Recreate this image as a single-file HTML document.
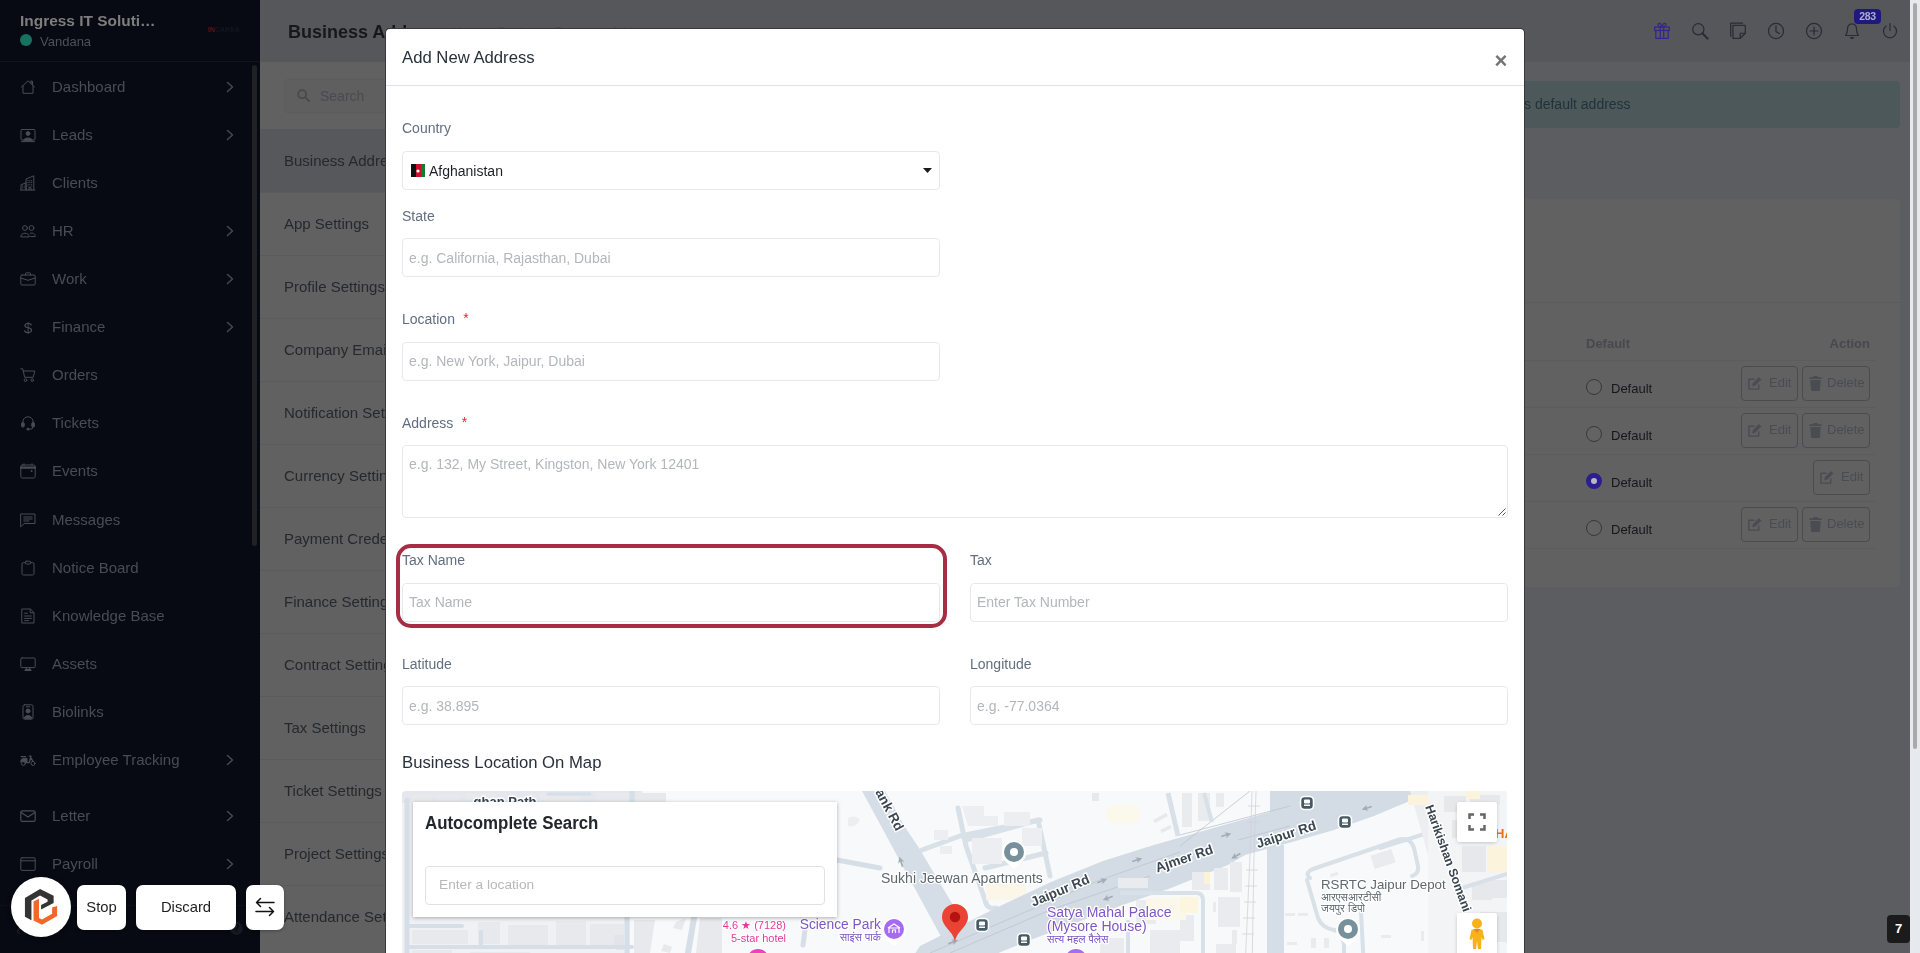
<!DOCTYPE html>
<html lang="en">
<head>
<meta charset="utf-8">
<title>Business Address</title>
<style>
*{box-sizing:border-box;margin:0;padding:0}
html,body{width:1920px;height:953px;overflow:hidden;background:#5c5d61;font-family:"Liberation Sans",sans-serif;}
.abs{position:absolute}
/* ---------- sidebar ---------- */
#sidebar{position:absolute;left:0;top:0;width:260px;height:953px;background:#070a13;overflow:hidden}
#sb-head{position:absolute;left:0;top:0;width:260px;height:62px;border-bottom:1px solid #11141c}
#sb-head .co{position:absolute;left:20px;top:11.5px;font-size:15.45px;font-weight:bold;color:#7e7e7e;white-space:nowrap;line-height:18px}
#sb-head .dot{position:absolute;left:20px;top:34.3px;width:12px;height:12px;border-radius:50%;background:#17735f}
#sb-head .un{position:absolute;left:40px;top:33.8px;font-size:13px;color:#4d5058;line-height:16px}
#sb-head .lg{position:absolute;left:208px;top:25px;font-size:7px;font-weight:bold;color:#6b1010;letter-spacing:0;line-height:10px;white-space:nowrap}
#sb-head .lg span{color:#15151a}
#sb-scroll{position:absolute;left:252px;top:65px;width:5px;height:481px;background:#1f2125;border-radius:3px}
.mi{position:absolute;left:0;width:252px;height:24px}
.mi .ic{position:absolute;left:20px;top:4px;width:16px;height:16px}
.mi .ic svg{display:block;width:16px;height:16px}
.mi .tx{position:absolute;left:52px;top:2px;font-size:15px;line-height:20px;color:#484c54;white-space:nowrap}
.mi .ch{position:absolute;left:224px;top:5px;width:12px;height:14px}
/* ---------- header ---------- */
#topbar{position:absolute;left:260px;top:0;width:1650px;height:62px;background:#56575b}
#topbar h1{position:absolute;left:28px;top:20px;font-size:18px;font-weight:bold;color:#17181c;line-height:24px;white-space:nowrap}
#crumbs i{font-style:normal;margin:0 3px}
#crumbs{position:absolute;left:192px;top:24px;font-size:13px;color:#4a4c52;white-space:nowrap;line-height:16px}
.ti{position:absolute;top:22px;width:18px;height:18px;margin-left:1px}
/* ---------- settings panel ---------- */
#setpanel{position:absolute;left:260px;top:62px;width:140px;height:891px;background:#616161;overflow:hidden}
#setsearch{position:absolute;left:24px;top:17px;width:200px;height:34px;border:1px solid #5b5c5e;border-radius:4px;background:#5f5f60}
#setsearch span{position:absolute;left:35px;top:7.2px;font-size:14px;color:#4a4b4f;line-height:18px}
.si{position:absolute;left:0;width:140px;height:63px;border-top:1px solid #5a5b5d}
.si span{position:absolute;left:24px;top:21px;font-size:15px;line-height:20px;color:#26282c;white-space:nowrap}
.si.act{background:#57585c;border-top-color:#57585c}
/* ---------- right content ---------- */
#alert{position:absolute;left:1500px;top:81px;width:400px;height:47px;background:#4d585b;border-radius:4px}
#alert span{position:absolute;left:24px;top:14px;font-size:14px;color:#1f3337;line-height:18px;white-space:nowrap}
#card{position:absolute;left:1500px;top:199px;width:400px;height:388px;background:#616161;border-radius:4px}
/* ---------- page scrollbar ---------- */
#pscroll{position:absolute;left:1910px;top:0;width:10px;height:953px;background:#e6e9ed}
#pscroll i{position:absolute;left:3px;top:3px;width:4px;height:746px;background:#a9a9a9;border-radius:2px}
/* ---------- modal ---------- */
#modal{position:absolute;left:385px;top:28px;width:1140px;height:940px;background:#fff;border-radius:5px;border:1px solid rgba(10,5,10,.8)}
#mwrap{position:absolute;left:1px;top:0;width:1137px;height:930px}
#map{position:absolute;left:15px;top:762px;width:1105px;height:178px;overflow:hidden;border-radius:4px}
#mhead{position:absolute;left:-1px;top:0;width:1138px;height:57px;border-bottom:1px solid #dfe3e8}
#mhead .t{position:absolute;left:16px;top:18px;font-size:16.7px;line-height:22px;color:#28313c;white-space:nowrap}
#mhead .x{position:absolute;left:1108.5px;top:19.5px;font-size:22px;font-weight:bold;line-height:24px;color:#747474}
.lb{position:absolute;font-size:14px;line-height:18px;color:#616e80;white-space:nowrap}
.lb sup{color:#e0213a;font-size:14px;vertical-align:baseline;position:relative;top:-1px;margin-left:4.5px}
.in{position:absolute;height:39px;border:1px solid #e5e9ee;border-radius:4px;background:#fff;font-size:14px;line-height:18px;color:#b3b6bb;padding:10px 0 0 6px;white-space:nowrap}
#hl{position:absolute;left:9px;top:515px;width:551px;height:84px;border:4px solid #a62d43;border-radius:15px}
.th{font-size:13px;font-weight:bold;line-height:16px;color:#47494d}
.btn{height:35px;border:1px solid #4b4c50;border-radius:4px}
.btn span{position:absolute;top:7px;font-size:13px;line-height:18px;color:#4a4c51}
.tb{top:885px;height:45px;border-radius:7px;background:#fff;font-size:14.8px;line-height:44px;text-align:center;color:#1d1d1f;box-shadow:0 1px 3px rgba(0,0,0,.3)}
#sidebar,#topbar,#setpanel,#alert,#card,#modal,.tb{will-change:transform}
</style>
</head>
<body>

<!-- ================= SIDEBAR ================= -->
<div id="sidebar">
  <div id="sb-head">
    <div class="co">Ingress IT Soluti…</div>
    <div class="dot"></div>
    <div class="un">Vandana</div>
    <div class="lg">IN<span>CAREA</span></div>
  </div>
  <div id="sb-scroll"></div>
    <div class="mi" style="top:75px"><span class="ic"><svg viewBox="0 0 16 16" fill="none" stroke="#484c54" stroke-width="1" stroke-linecap="round" stroke-linejoin="round"><path d="M1.5 8 L8 1.8 L14.5 8"/><path d="M3 6.8 V14.3 H13 V6.8"/><path d="M11 2.2 V4.4 M11 2.2 H12.5 V5.6"/></svg></span><span class="tx">Dashboard</span><svg class="ch" viewBox="0 0 12 14" fill="none" stroke="#484c54" stroke-width="1.4" stroke-linecap="round" stroke-linejoin="round"><path d="M3.5 2.5 L8.5 7 L3.5 11.5"/></svg></div>
  <div class="mi" style="top:123px"><span class="ic"><svg viewBox="0 0 16 16" fill="none" stroke="#484c54" stroke-width="1" stroke-linecap="round" stroke-linejoin="round"><rect x="1" y="2.5" width="14" height="10.5" rx="1"/><circle cx="8" cy="6.5" r="1.9" fill="#484c54"/><path d="M3.8 13 C4.3 10.3 11.7 10.3 12.2 13 Z" fill="#484c54"/><path d="M1.5 14.6 H14.5"/></svg></span><span class="tx">Leads</span><svg class="ch" viewBox="0 0 12 14" fill="none" stroke="#484c54" stroke-width="1.4" stroke-linecap="round" stroke-linejoin="round"><path d="M3.5 2.5 L8.5 7 L3.5 11.5"/></svg></div>
  <div class="mi" style="top:171px"><span class="ic"><svg viewBox="0 0 16 16" fill="none" stroke="#484c54" stroke-width="1" stroke-linecap="round" stroke-linejoin="round"><path d="M1 15 V9.8 L6 7.8 V15 M6 15 V4 L13.8 0.8 V15 M0.5 15 H14.8 M9 15 V12.6 H11 V15"/><path d="M2.4 11h.1M4.2 11h.1M2.4 12.8h.1M4.2 12.8h.1M8 5.600h.1M9.800 5.600h.1M11.600 5.600h.1M8 7.400h.1M9.800 7.400h.1M11.600 7.400h.1M8 9.200h.1M9.800 9.200h.1M11.600 9.200h.1M8 11h.1M9.800 11h.1M11.600 11h.1" stroke-width="1.1"/></svg></span><span class="tx">Clients</span></div>
  <div class="mi" style="top:218.5px"><span class="ic"><svg viewBox="0 0 16 16" fill="none" stroke="#484c54" stroke-width="1" stroke-linecap="round" stroke-linejoin="round"><circle cx="5" cy="5" r="2.4"/><circle cx="11.5" cy="5" r="2.4"/><path d="M0.8 13.5 C0.8 9 9.2 9 9.2 13.5 Z"/><path d="M10.8 13.5 H15.2 C15.2 10.4 12.5 9.6 10.3 10.3"/></svg></span><span class="tx">HR</span><svg class="ch" viewBox="0 0 12 14" fill="none" stroke="#484c54" stroke-width="1.4" stroke-linecap="round" stroke-linejoin="round"><path d="M3.5 2.5 L8.5 7 L3.5 11.5"/></svg></div>
  <div class="mi" style="top:267px"><span class="ic"><svg viewBox="0 0 16 16" fill="none" stroke="#484c54" stroke-width="1" stroke-linecap="round" stroke-linejoin="round"><rect x="0.8" y="4" width="14.4" height="10" rx="1.2"/><path d="M5.5 4 V2.6 Q5.5 1.8 6.3 1.8 H9.7 Q10.5 1.8 10.5 2.6 V4"/><path d="M0.8 7 L8 9.3 L15.2 7"/></svg></span><span class="tx">Work</span><svg class="ch" viewBox="0 0 12 14" fill="none" stroke="#484c54" stroke-width="1.4" stroke-linecap="round" stroke-linejoin="round"><path d="M3.5 2.5 L8.5 7 L3.5 11.5"/></svg></div>
  <div class="mi" style="top:315px"><span class="ic"><svg viewBox="0 0 16 16"><text x="8" y="13.6" font-family="Liberation Sans, sans-serif" font-size="15.5" text-anchor="middle" fill="#484c54">$</text></svg></span><span class="tx">Finance</span><svg class="ch" viewBox="0 0 12 14" fill="none" stroke="#484c54" stroke-width="1.4" stroke-linecap="round" stroke-linejoin="round"><path d="M3.5 2.5 L8.5 7 L3.5 11.5"/></svg></div>
  <div class="mi" style="top:363px"><span class="ic"><svg viewBox="0 0 16 16" fill="none" stroke="#484c54" stroke-width="1" stroke-linecap="round" stroke-linejoin="round"><path d="M0.8 1.8 H2.8 L4.6 10.3 H13.2 L14.8 4 H3.3"/><circle cx="5.5" cy="13.2" r="1.3"/><circle cx="12.2" cy="13.2" r="1.3"/></svg></span><span class="tx">Orders</span></div>
  <div class="mi" style="top:410.8px"><span class="ic"><svg viewBox="0 0 16 16" fill="none" stroke="#484c54" stroke-width="1" stroke-linecap="round" stroke-linejoin="round"><path d="M2.8 9.5 V7 A5.2 5.2 0 0 1 13.2 7 V9.5"/><rect x="1.6" y="7.6" width="2.6" height="4.4" rx="1" fill="#484c54"/><rect x="11.8" y="7.6" width="2.6" height="4.4" rx="1" fill="#484c54"/><path d="M13.2 12 Q13.2 14.2 10 14.2 H8.5"/><rect x="6.8" y="13.4" width="2.4" height="1.5" rx=".7" fill="#484c54"/></svg></span><span class="tx">Tickets</span></div>
  <div class="mi" style="top:459px"><span class="ic"><svg viewBox="0 0 16 16" fill="none" stroke="#484c54" stroke-width="1" stroke-linecap="round" stroke-linejoin="round"><rect x="0.8" y="2" width="14.4" height="13" rx="1.6"/><path d="M0.8 4.6 H15.2" stroke-width="2.2"/><circle cx="11.6" cy="8" r="1" fill="#484c54" stroke="none"/><path d="M4 0.8 V2 M12 0.8 V2"/></svg></span><span class="tx">Events</span></div>
  <div class="mi" style="top:507.8px"><span class="ic"><svg viewBox="0 0 16 16" fill="none" stroke="#484c54" stroke-width="1" stroke-linecap="round" stroke-linejoin="round"><path d="M1 2 H15 V11.5 H4.2 L1 14.6 Z"/><path d="M3.8 5 H12.2 M3.8 7 H12.2 M3.8 9 H9"/></svg></span><span class="tx">Messages</span></div>
  <div class="mi" style="top:555.8px"><span class="ic"><svg viewBox="0 0 16 16" fill="none" stroke="#484c54" stroke-width="1" stroke-linecap="round" stroke-linejoin="round"><path d="M5.2 2.6 H3.4 Q2 2.6 2 4 V13.6 Q2 15 3.4 15 H12.6 Q14 15 14 13.6 V4 Q14 2.6 12.6 2.6 H10.8"/><rect x="5.4" y="1.2" width="5.2" height="2.8" rx=".8"/></svg></span><span class="tx">Notice Board</span></div>
  <div class="mi" style="top:604px"><span class="ic"><svg viewBox="0 0 16 16" fill="none" stroke="#484c54" stroke-width="1" stroke-linecap="round" stroke-linejoin="round"><path d="M2.2 1 H10.4 L14 4.6 V15 H2.2 Z"/><path d="M10.2 1.2 V4.8 H13.8"/><path d="M4.6 5.2 H7.4 M4.6 8 H11.4 M4.6 10.4 H11.4 M4.6 12.6 H8.6"/></svg></span><span class="tx">Knowledge Base</span></div>
  <div class="mi" style="top:652px"><span class="ic"><svg viewBox="0 0 16 16" fill="none" stroke="#484c54" stroke-width="1" stroke-linecap="round" stroke-linejoin="round"><rect x="0.8" y="2" width="14.4" height="9.6" rx="1.2"/><path d="M5 14.4 H11 M6.4 11.8 L5.8 14.2 M9.6 11.8 L10.2 14.2" stroke-width="1.2"/><path d="M5.6 13 H10.4 V14.4 H5.6Z" fill="#484c54" stroke="none"/></svg></span><span class="tx">Assets</span></div>
  <div class="mi" style="top:699.8px"><span class="ic"><svg viewBox="0 0 16 16" fill="none" stroke="#484c54" stroke-width="1" stroke-linecap="round" stroke-linejoin="round"><rect x="3" y="0.8" width="10" height="14.4" rx="1.6"/><circle cx="8" cy="7" r="2" fill="#484c54"/><path d="M4.2 14 C4.6 10.6 11.4 10.6 11.8 14 Z" fill="#484c54"/><path d="M6.4 2.8 H9.6"/></svg></span><span class="tx">Biolinks</span></div>
  <div class="mi" style="top:748px"><span class="ic"><svg viewBox="0 0 16 16" fill="none" stroke="#484c54" stroke-width="1" stroke-linecap="round" stroke-linejoin="round"><circle cx="3.4" cy="11.4" r="2"/><circle cx="13" cy="11.4" r="2"/><path d="M0.6 9.8 Q0.6 6.4 4 6.4 H7 V10.6 H5.4" fill="#484c54"/><path d="M7 10.6 H9.2 L11 4.2 H9.4 M11 6 L13 9.4" stroke-width="1.3"/><path d="M1.2 4.6 H5.6" stroke-width="1.4"/></svg></span><span class="tx">Employee Tracking</span><svg class="ch" viewBox="0 0 12 14" fill="none" stroke="#484c54" stroke-width="1.4" stroke-linecap="round" stroke-linejoin="round"><path d="M3.5 2.5 L8.5 7 L3.5 11.5"/></svg></div>
  <div class="mi" style="top:803.8px"><span class="ic"><svg viewBox="0 0 16 16" fill="none" stroke="#484c54" stroke-width="1" stroke-linecap="round" stroke-linejoin="round"><rect x="0.8" y="2.8" width="14.4" height="10.6" rx="1.6" stroke-width="1.2"/><path d="M1.2 4.4 L8 9 L14.8 4.4" stroke-width="1.2"/></svg></span><span class="tx">Letter</span><svg class="ch" viewBox="0 0 12 14" fill="none" stroke="#484c54" stroke-width="1.4" stroke-linecap="round" stroke-linejoin="round"><path d="M3.5 2.5 L8.5 7 L3.5 11.5"/></svg></div>
  <div class="mi" style="top:852px"><span class="ic"><svg viewBox="0 0 16 16" fill="none" stroke="#484c54" stroke-width="1" stroke-linecap="round" stroke-linejoin="round"><rect x="0.8" y="1.8" width="14.4" height="12.6" rx="1.2"/><path d="M0.8 4.8 H15.2"/></svg></span><span class="tx">Payroll</span><svg class="ch" viewBox="0 0 12 14" fill="none" stroke="#484c54" stroke-width="1.4" stroke-linecap="round" stroke-linejoin="round"><path d="M3.5 2.5 L8.5 7 L3.5 11.5"/></svg></div>
  <div class="abs" style="left:0;top:905px;width:260px;height:1px;background:#0e1018"></div>
  <div class="abs" style="left:16px;top:921px;font-size:15px;font-weight:bold;line-height:18px;color:#1a1d26">‹</div>
  <div class="abs" style="left:230px;top:922px;width:13px;height:13px;border-radius:50%;background:#171921;color:#070a13;font-size:10px;font-weight:bold;line-height:13px;text-align:center">?</div>
</div>

<!-- ================= TOP BAR ================= -->
<div id="topbar">
  <h1>Business Address</h1>
  <div id="crumbs">Home<i>•</i>Settings<i>•</i>Business Address</div>
    <svg class="ti" style="left:1392px" viewBox="0 0 16 16" fill="none" stroke="#33278a" stroke-width="1.1"><rect x="1.500" y="4.500" width="13" height="3"/><path d="M2.500 7.500 V14.500 H13.500 V7.500 M6.500 4.500 V14.500 M9.500 4.500 V14.500"/><path d="M8 4.300 C6 4.300 4.500 3.500 4.500 2.300 C4.500 1 6.300 0.700 7 2 Z M8 4.300 C10 4.300 11.500 3.500 11.500 2.300 C11.500 1 9.700 0.700 9 2 Z"/></svg>
  <svg class="ti" style="left:1430px" viewBox="0 0 16 16" fill="none" stroke="#2a2c32" stroke-width="1.1" stroke-linecap="round"><circle cx="6.500" cy="6.500" r="5"/><path d="M10.300 10.300 L14.800 14.800" stroke-width="1.800"/></svg>
  <svg class="ti" style="left:1468px" viewBox="0 0 16 16" fill="none" stroke="#2a2c32" stroke-width="1.100" stroke-linejoin="round"><path d="M3.500 3 H14.500 V10 L10 14.500 H3.500 Z"/><path d="M14.300 10 H10 V14.300"/><path d="M1.500 13 V1 H12.500"/></svg>
  <svg class="ti" style="left:1506px" viewBox="0 0 16 16" fill="none" stroke="#2a2c32" stroke-width="1.100" stroke-linecap="round"><circle cx="8" cy="8" r="6.700"/><path d="M8 3.500 V8.500 L11 10.300"/></svg>
  <svg class="ti" style="left:1544px" viewBox="0 0 16 16" fill="none" stroke="#2a2c32" stroke-width="1.100" stroke-linecap="round"><circle cx="8" cy="8" r="6.700"/><path d="M8 4.500 V11.500 M4.500 8 H11.500"/></svg>
  <svg class="ti" style="left:1582px" viewBox="0 0 16 16" fill="none" stroke="#2a2c32" stroke-width="1.100" stroke-linejoin="round"><path d="M8 1.600 C5.200 1.600 4 3.800 4 6.200 C4 9.500 3 11 2.300 12 H13.700 C13 11 12 9.500 12 6.200 C12 3.800 10.800 1.600 8 1.600 Z"/><path d="M6.800 13.800 A1.300 1.300 0 0 0 9.200 13.800 Z" fill="#2a2c32"/></svg>
  <svg class="ti" style="left:1620px" viewBox="0 0 16 16" fill="none" stroke="#2a2c32" stroke-width="1.100" stroke-linecap="round"><path d="M8 1.500 V7.500"/><path d="M4.600 3.600 A5.800 5.800 0 1 0 11.400 3.600"/></svg>
  <div class="abs" style="left:1594px;top:9px;width:27px;height:15px;border-radius:4px;background:#1e1a7d;color:#adacd0;font-size:10.500px;font-weight:bold;line-height:15px;text-align:center;letter-spacing:-.3px">283</div>

</div>

<!-- ================= SETTINGS PANEL ================= -->
<div id="setpanel">
  <div id="setsearch"><svg class="abs" style="left:12px;top:9.3px" width="13" height="13" viewBox="0 0 13 13" fill="none" stroke="#47494d" stroke-width="1.800" stroke-linecap="round"><circle cx="5.200" cy="5.200" r="4"/><path d="M8.300 8.300 L12 12"/></svg><span>Search</span></div>
    <div class="si act" style="top:67px"><span>Business Address</span></div>
  <div class="si" style="top:130px"><span>App Settings</span></div>
  <div class="si" style="top:193px"><span>Profile Settings</span></div>
  <div class="si" style="top:256px"><span>Company Email Settings</span></div>
  <div class="si" style="top:319px"><span>Notification Settings</span></div>
  <div class="si" style="top:382px"><span>Currency Settings</span></div>
  <div class="si" style="top:445px"><span>Payment Credentials</span></div>
  <div class="si" style="top:508px"><span>Finance Settings</span></div>
  <div class="si" style="top:571px"><span>Contract Settings</span></div>
  <div class="si" style="top:634px"><span>Tax Settings</span></div>
  <div class="si" style="top:697px"><span>Ticket Settings</span></div>
  <div class="si" style="top:760px"><span>Project Settings</span></div>
  <div class="si" style="top:823px"><span>Attendance Settings</span></div>
</div>

<!-- ================= RIGHT CONTENT ================= -->
<div id="alert"><span>s default address</span></div>
<div id="card">
    <div class="abs" style="left:0;top:103px;width:400px;height:1px;background:#5b5b5c"></div>
  <div class="abs th" style="left:86px;top:137px">Default</div>
  <div class="abs th" style="right:30px;top:137px">Action</div>
  <div class="abs" style="left:0;top:161px;width:376px;height:1px;background:#5c5c5d"></div>
  <div class="abs" style="left:86px;top:180px;width:16px;height:16px;border-radius:50%;border:1px solid #37383b;background:#636364"></div>
  <div class="abs" style="left:111px;top:182px;font-size:13px;line-height:16px;color:#16171a">Default</div>
  <div class="abs btn" style="left:241px;top:167px;width:57px"><svg class="abs" style="left:4.5px;top:9px" width="15" height="15" viewBox="0 0 16 16" fill="none" stroke="#4a4c51" stroke-width="1.500" stroke-linejoin="round"><path d="M12.500 9 V14 H2 V3.500 H8"/><path d="M6 10.500 L6.800 7.500 L12.700 1.600 L14.900 3.800 L9 9.700 Z" fill="#4a4c51" stroke-width=".8"/></svg><span style="left:27px">Edit</span></div>
  <div class="abs btn" style="left:302px;top:167px;width:68px"><svg class="abs" style="left:5.5px;top:9px" width="13" height="15" viewBox="0 0 13 15" fill="#4a4c51"><path d="M4.500 0 H8.500 L9 1.200 H12.500 V3 H0.500 V1.200 H4 Z"/><path d="M1.300 4 H11.700 L11 14 Q10.900 15 10 15 H3 Q2.100 15 2 14 Z"/></svg><span style="left:24px">Delete</span></div>
  <div class="abs" style="left:0;top:208px;width:376px;height:1px;background:#5c5c5d"></div>
  <div class="abs" style="left:86px;top:227px;width:16px;height:16px;border-radius:50%;border:1px solid #37383b;background:#636364"></div>
  <div class="abs" style="left:111px;top:229px;font-size:13px;line-height:16px;color:#16171a">Default</div>
  <div class="abs btn" style="left:241px;top:214px;width:57px"><svg class="abs" style="left:4.5px;top:9px" width="15" height="15" viewBox="0 0 16 16" fill="none" stroke="#4a4c51" stroke-width="1.500" stroke-linejoin="round"><path d="M12.500 9 V14 H2 V3.500 H8"/><path d="M6 10.500 L6.800 7.500 L12.700 1.600 L14.900 3.800 L9 9.700 Z" fill="#4a4c51" stroke-width=".8"/></svg><span style="left:27px">Edit</span></div>
  <div class="abs btn" style="left:302px;top:214px;width:68px"><svg class="abs" style="left:5.5px;top:9px" width="13" height="15" viewBox="0 0 13 15" fill="#4a4c51"><path d="M4.500 0 H8.500 L9 1.200 H12.500 V3 H0.500 V1.200 H4 Z"/><path d="M1.300 4 H11.700 L11 14 Q10.900 15 10 15 H3 Q2.100 15 2 14 Z"/></svg><span style="left:24px">Delete</span></div>
  <div class="abs" style="left:0;top:255px;width:376px;height:1px;background:#5c5c5d"></div>
  <div class="abs" style="left:86px;top:274px;width:16px;height:16px;border-radius:50%;border:5px solid #2b1e8f;background:#b9b9c6"></div>
  <div class="abs" style="left:111px;top:276px;font-size:13px;line-height:16px;color:#16171a">Default</div>
  <div class="abs btn" style="left:313px;top:261px;width:57px"><svg class="abs" style="left:4.5px;top:9px" width="15" height="15" viewBox="0 0 16 16" fill="none" stroke="#4a4c51" stroke-width="1.500" stroke-linejoin="round"><path d="M12.500 9 V14 H2 V3.500 H8"/><path d="M6 10.500 L6.800 7.500 L12.700 1.600 L14.900 3.800 L9 9.700 Z" fill="#4a4c51" stroke-width=".8"/></svg><span style="left:27px">Edit</span></div>
  <div class="abs" style="left:0;top:302px;width:376px;height:1px;background:#5c5c5d"></div>
  <div class="abs" style="left:86px;top:321px;width:16px;height:16px;border-radius:50%;border:1px solid #37383b;background:#636364"></div>
  <div class="abs" style="left:111px;top:323px;font-size:13px;line-height:16px;color:#16171a">Default</div>
  <div class="abs btn" style="left:241px;top:308px;width:57px"><svg class="abs" style="left:4.5px;top:9px" width="15" height="15" viewBox="0 0 16 16" fill="none" stroke="#4a4c51" stroke-width="1.500" stroke-linejoin="round"><path d="M12.500 9 V14 H2 V3.500 H8"/><path d="M6 10.500 L6.800 7.500 L12.700 1.600 L14.900 3.800 L9 9.700 Z" fill="#4a4c51" stroke-width=".8"/></svg><span style="left:27px">Edit</span></div>
  <div class="abs btn" style="left:302px;top:308px;width:68px"><svg class="abs" style="left:5.5px;top:9px" width="13" height="15" viewBox="0 0 13 15" fill="#4a4c51"><path d="M4.500 0 H8.500 L9 1.200 H12.500 V3 H0.500 V1.200 H4 Z"/><path d="M1.300 4 H11.700 L11 14 Q10.900 15 10 15 H3 Q2.100 15 2 14 Z"/></svg><span style="left:24px">Delete</span></div>
  <div class="abs" style="left:0;top:349px;width:376px;height:1px;background:#5c5c5d"></div>
</div>

<div id="pscroll"><i></i></div>

<!-- ================= MODAL ================= -->
<div id="modal"><div id="mwrap">
  <div id="mhead"><div class="t">Add New Address</div><div class="x">×</div></div>
    <div class="lb" style="left:15px;top:90px">Country</div>
  <div class="in" style="left:15px;top:122px;width:538px;color:#1d2126">
    <svg class="abs" style="left:8px;top:12px" width="14" height="13" viewBox="0 0 14 13"><rect width="5" height="13" fill="#111"/><rect x="5" width="5" height="13" fill="#c8102e"/><rect x="10" width="4" height="13" fill="#167a2e"/><circle cx="7" cy="7" r="1.6" fill="#fff"/></svg>
    <span class="abs" style="left:26px;top:9.5px">Afghanistan</span>
    <svg class="abs" style="left:520px;top:16px" width="9" height="5" viewBox="0 0 9 5"><path d="M0 0H9L4.5 5Z" fill="#1b1b1b"/></svg>
  </div>
  <div class="lb" style="left:15px;top:178px">State</div>
  <div class="in" style="left:15px;top:209px;width:538px">e.g. California, Rajasthan, Dubai</div>
  <div class="lb" style="left:15px;top:281px">Location <sup>*</sup></div>
  <div class="in" style="left:15px;top:313px;width:538px;padding-top:9px">e.g. New York, Jaipur, Dubai</div>
  <div class="lb" style="left:15px;top:385px">Address <sup>*</sup></div>
  <div class="in" style="left:15px;top:416px;width:1106px;height:73px;padding-top:9px">e.g. 132, My Street, Kingston, New York 12401
    <svg class="abs" style="right:1px;bottom:1px" width="9" height="9" viewBox="0 0 9 9" stroke="#555" stroke-width="1"><path d="M8.5 1.5 L1.5 8.5 M8.5 5.5 L5.5 8.5"/></svg>
  </div>
  <div id="hl"></div>
  <div class="lb" style="left:15px;top:522px">Tax Name</div>
  <div class="in" style="left:15px;top:554px;width:538px;padding-top:9px">Tax Name</div>
  <div class="lb" style="left:583px;top:522px">Tax</div>
  <div class="in" style="left:583px;top:554px;width:538px;padding-top:9px">Enter Tax Number</div>
  <div class="lb" style="left:15px;top:626px">Latitude</div>
  <div class="in" style="left:15px;top:657px;width:538px">e.g. 38.895</div>
  <div class="lb" style="left:583px;top:626px">Longitude</div>
  <div class="in" style="left:583px;top:657px;width:538px">e.g. -77.0364</div>
  <div class="abs" style="left:15px;top:722.7px;font-size:16.7px;line-height:22px;color:#28313c;white-space:nowrap">Business Location On Map</div>
  <div id="map">
    <svg class="abs" style="left:0;top:0" width="1105" height="178" viewBox="402 791 1105 178" font-family="Liberation Sans, sans-serif">
  <rect x="402" y="791" width="1105" height="178" fill="#f8f9fa"/>
  <!-- left dense area -->
  <rect x="402" y="791" width="228" height="178" fill="#eff1f5"/>
  <rect x="402" y="791" width="240" height="12" fill="#e4e8ee"/>
  <g fill="#e7e9ed">
    <rect x="412" y="794" width="20" height="12"/><rect x="436" y="794" width="24" height="10"/><rect x="466" y="793" width="30" height="9"/><rect x="540" y="793" width="40" height="9"/><rect x="596" y="793" width="36" height="9"/><rect x="636" y="793" width="30" height="16"/>
    <rect x="412" y="930" width="56" height="14"/><rect x="478" y="922" width="22" height="22"/><rect x="508" y="925" width="40" height="20"/><rect x="556" y="921" width="30" height="24"/><rect x="590" y="924" width="34" height="22"/>
    <rect x="412" y="950" width="40" height="10"/><rect x="470" y="952" width="60" height="10"/>
    <rect x="616" y="939" width="8" height="11" fill="#e3e6ea"/>
    <path d="M634 920 H655 L650 953 H634Z"/><path d="M676 922 L686 918 L682 930 L673 928Z"/><path d="M664 944 L672 947 L670 953 L661 951Z"/>
    <path d="M700 918 H722 V953 H696Z"/>
    <rect x="614" y="935" width="10" height="12" fill="#e1e4e9"/>
  </g>
  <g fill="none" stroke="#d6dee7" stroke-linecap="round">
    <path d="M407 800 V953" stroke-width="5"/>
    <path d="M408 926 H462" stroke-width="4"/>
    <path d="M408 947 H632" stroke-width="4"/>
    <path d="M481 932 V947" stroke-width="4"/>
    <path d="M632 791 V802" stroke-width="5"/><path d="M627 918 V953" stroke-width="5"/>
    <path d="M548 794 H590" stroke-width="3"/>
    <path d="M694 918 L688 953" stroke-width="6"/>
    <path d="M805 930 L803 945" stroke-width="5"/>
    <path d="M837 860 L880 868" stroke-width="5"/>
  </g>
  <!-- Bank Rd -->
  <path d="M862 791 L885 791 L905 827 L919 848 L950 900 L968 930 L945 944 Z" fill="#d5dde6"/>
  <!-- streets near Sukhi Jeewan -->
  <g fill="none" stroke="#d8e0e8" stroke-linecap="round" stroke-linejoin="round">
    <path d="M922 850 L960 836 L1040 820" stroke-width="5"/>
    <path d="M958 808 L966 846 L985 900 Q987 910 996 908" stroke-width="5"/>
    <path d="M966 840 L1038 820 L1050 876" stroke-width="5"/>
    <path d="M985 868 L1046 853" stroke-width="5"/>
  </g>
  <g fill="#eceef1">
    <path d="M962 806 h22 v10 h14 v10 h-30 z"/><rect x="972" y="838" width="30" height="26"/><rect x="1004" y="812" width="26" height="14"/><rect x="1022" y="828" width="20" height="18"/><rect x="934" y="830" width="14" height="10"/><rect x="940" y="846" width="12" height="8"/>
    <path d="M848 818 q8 -4 12 2 q-4 8 -12 6z"/>
  </g>
  <rect x="986" y="880" width="40" height="20" fill="#fbf6e8"/>
  <rect x="1106" y="805" width="34" height="18" rx="8" fill="#fbf8ec"/>
  <!-- Jaipur / Ajmer road -->
  <path d="M905 969 L920 946 L1000 906 L1051 882 L1103 861 L1154 845 L1231 823 L1270 812 L1270 791 L1432 791 L1412 800 L1374 816 L1334 830 L1285 844 L1245 855 L1228 865 L1171 888 L1120 906 L1025 942 L960 969 Z" fill="#d3dbe4"/>
  <g fill="none" stroke="#bcc5ce" stroke-width=".8">
    <path d="M930 953 L1100 880 L1180 852"/><path d="M950 953 L1050 910 L1150 876"/><path d="M1238 840 L1290 826"/><path d="M1180 835 L1290 806"/>
    <path d="M1250 791 L1180 846"/>
  </g>
  <!-- vertical road right of railway -->
  <path d="M1267 845 H1284 V969 H1267Z" fill="#d5dde6"/>
  <!-- railway -->
  <g fill="none" stroke="#cfd3d8" stroke-width=".8"><path d="M1252 791 L1250 856 L1245 969"/><path d="M1256 791 L1254 856 L1252 969"/>
    <path d="M1248 806h12M1247 822h12M1246 870h12M1245 886h12M1244 902h12M1243 918h12M1242 934h12"/></g>
  <!-- top centre buildings -->
  <g fill="#e6e9ed"><rect x="1092" y="793" width="7" height="8"/><path d="M1153 820 l13 -7 l2 3 l-13 7z"/><path d="M1160 830 l10 -5 l2 3 l-10 5z"/>
    <rect x="1182" y="793" width="10" height="34" fill="#e9ecef"/><rect x="1198" y="793" width="12" height="28" fill="#e9ecef"/><rect x="1216" y="793" width="8" height="14" fill="#e9ecef"/></g>
  <path d="M1168 793 L1178 836" stroke="#d8e0e8" stroke-width="5" fill="none"/>
  <path d="M1204 793 L1212 822" stroke="#d8e0e8" stroke-width="4" fill="none"/>
  <!-- buildings south of road -->
  <g fill="#e9ebee"><rect x="1192" y="872" width="18" height="18"/><rect x="1214" y="868" width="14" height="22"/><rect x="1230" y="862" width="12" height="30"/><rect x="1218" y="897" width="22" height="30"/><rect x="1180" y="915" width="14" height="26"/><rect x="1216" y="944" width="20" height="12"/><rect x="1213" y="902" width="3" height="10"/><rect x="1232" y="930" width="5" height="14"/>
   <rect x="1118" y="878" width="30" height="10"/><rect x="1136" y="900" width="20" height="24"/><rect x="1150" y="930" width="30" height="23"/><rect x="1100" y="938" width="24" height="15"/></g>
  <rect x="1146" y="898" width="40" height="22" fill="#fbf7ea"/>
  <rect x="1180" y="897" width="18" height="16" fill="#fcf6df"/>
  <rect x="1204" y="872" width="6" height="12" fill="#fcf3d6"/>
  <path d="M1120 893 H1196 Q1203 893 1203 900 V969" fill="none" stroke="#d8e0e8" stroke-width="4"/>
  <path d="M1128 920 V969" fill="none" stroke="#d8e0e8" stroke-width="4"/>
  <!-- depot loop -->
  <g fill="none" stroke="#d8e0e8" stroke-width="4" stroke-linecap="round" stroke-linejoin="round">
    <path d="M1310 878 Q1304 873 1313 869 L1398 840 Q1410 836 1414 848 L1418 866 Q1419 874 1412 876"/>
    <path d="M1307 880 L1318 918 Q1322 928 1334 930 Q1343 932 1344 945 V969"/>
    <path d="M1361 912 L1364 969"/>
    <path d="M1380 848 L1507 808"/>
    <path d="M1462 888 L1507 874"/>
  </g>
  <g fill="#e9ebee"><rect x="1372" y="852" width="22" height="14" transform="rotate(-18 1383 859)"/><rect x="1285" y="913" width="10" height="3"/><rect x="1298" y="913" width="10" height="3"/><rect x="1287" y="942" width="10" height="3"/><rect x="1311" y="938" width="5" height="10"/><rect x="1324" y="938" width="5" height="10"/><rect x="1381" y="935" width="10" height="3"/><rect x="1421" y="931" width="3" height="10"/><rect x="1330" y="873" width="8" height="3" transform="rotate(-18 1334 874)"/></g>
  <!-- Harikishan Somani street & east buildings -->
  <path d="M1410 791 L1428 791 L1478 969 L1460 969 Z" fill="#eceef2"/>
  <rect x="1428" y="791" width="79" height="178" fill="#f3f4f6"/>
  <g fill="#e6e8ec"><rect x="1444" y="796" width="22" height="16"/><rect x="1470" y="795" width="30" height="10"/><rect x="1452" y="820" width="26" height="18"/><rect x="1462" y="846" width="24" height="26"/><rect x="1472" y="882" width="20" height="18"/><rect x="1490" y="880" width="17" height="18"/><rect x="1480" y="912" width="27" height="30"/></g>
  <rect x="1488" y="846" width="19" height="26" fill="#fbf3dc"/><rect x="1466" y="791" width="14" height="8" fill="#fbf3dc"/><rect x="1408" y="795" width="20" height="10" fill="#fbf3dc"/>
  <path d="M1462 888 L1507 874" stroke="#d8e0e8" stroke-width="4" fill="none"/>
  <!-- arrows -->
  <g fill="#a3abb3"><path transform="translate(901 862) rotate(-108)" d="M-5 -0.8 H0.5 L-0.8 -3.2 L5.5 0 L-0.8 3.2 L0.5 0.8 H-5 Z"/><path transform="translate(1102 881) rotate(-20)" d="M-5 -0.8 H0.5 L-0.8 -3.2 L5.5 0 L-0.8 3.2 L0.5 0.8 H-5 Z"/><path transform="translate(1137 860) rotate(-18)" d="M-5 -0.8 H0.5 L-0.8 -3.2 L5.5 0 L-0.8 3.2 L0.5 0.8 H-5 Z"/><path transform="translate(1108 898) rotate(160)" d="M-5 -0.8 H0.5 L-0.8 -3.2 L5.5 0 L-0.8 3.2 L0.5 0.8 H-5 Z"/><path transform="translate(1226 835) rotate(-17)" d="M-5 -0.8 H0.5 L-0.8 -3.2 L5.5 0 L-0.8 3.2 L0.5 0.8 H-5 Z"/><path transform="translate(1236 856) rotate(150)" d="M-5 -0.8 H0.5 L-0.8 -3.2 L5.5 0 L-0.8 3.2 L0.5 0.8 H-5 Z"/><path transform="translate(1367 808) rotate(163)" d="M-5 -0.8 H0.5 L-0.8 -3.2 L5.5 0 L-0.8 3.2 L0.5 0.8 H-5 Z"/><path transform="translate(953 942) rotate(-20)" d="M-5 -0.8 H0.5 L-0.8 -3.2 L5.5 0 L-0.8 3.2 L0.5 0.8 H-5 Z"/></g>
  <!-- labels -->
  <g font-size="13.5" font-weight="bold" fill="#3a4652" stroke="#fff" stroke-width="3" paint-order="stroke" stroke-linejoin="round" text-anchor="middle">
    <text transform="translate(890 809.5) rotate(62)" y="5">ank Rd</text>
    <text transform="translate(1060 890) rotate(-23)" y="5">Jaipur Rd</text>
    <text transform="translate(1184 858) rotate(-19)" y="5">Ajmer Rd</text>
    <text transform="translate(1286 834) rotate(-18)" y="5">Jaipur Rd</text>
    <text transform="translate(1449 858) rotate(70)" y="5" font-size="12.5">Harikishan Somani</text>
    <text x="505" y="806" font-size="13">ghan Path</text>
  </g>
  <g font-size="14" fill="#5d6871" stroke="#fff" stroke-width="2.5" paint-order="stroke" stroke-linejoin="round">
    <text x="881" y="883">Sukhi Jeewan Apartments</text>
    <text x="1321" y="888.7" font-size="13.3">RSRTC Jaipur Depot</text>
    <text x="1321" y="901" font-size="11" font-family="Liberation Sans, FreeSans, sans-serif">आरएसआरटीसी</text>
    <text x="1321" y="912" font-size="11" font-family="Liberation Sans, FreeSans, sans-serif">जयपुर डिपो</text>
  </g>
  <g font-size="14" fill="#7e57c2" stroke="#fff" stroke-width="2.5" paint-order="stroke" stroke-linejoin="round">
    <text x="1047" y="917">Satya Mahal Palace</text>
    <text x="1047" y="931">(Mysore House)</text>
    <text x="1047" y="943" font-size="11" font-family="Liberation Sans, FreeSans, sans-serif">सत्य महल पैलेस</text>
    <text x="881" y="929" text-anchor="end" font-size="13.8">Science Park</text>
    <text x="881" y="941" font-size="11" text-anchor="end" font-family="Liberation Sans, FreeSans, sans-serif">साइंस पार्क</text>
  </g>
  <g font-size="11" fill="#e5399e" stroke="#fff" stroke-width="2.5" paint-order="stroke" stroke-linejoin="round" text-anchor="end">
    <text x="786" y="928.5">4.6 ★ (7128)</text>
    <text x="786" y="941.5">5-star hotel</text>
  </g>
  <text x="1495" y="838" font-size="13" font-weight="bold" fill="#e8710a">HA</text>
  <!-- POI pins -->
  <g>
    <path d="M1014 869 L1005 861 A12 12 0 1 1 1023 861 Z" fill="#fff"/><circle cx="1014" cy="852" r="10" fill="#78909c"/><circle cx="1014" cy="852" r="4" fill="#fff"/>
    <path d="M1348 946 L1339 938 A12 12 0 1 1 1357 938 Z" fill="#fff"/><circle cx="1348" cy="929" r="10" fill="#78909c"/><circle cx="1348" cy="929" r="4" fill="#fff"/>
    <path d="M894 946 L885 938 A12 12 0 1 1 903 938 Z" fill="#fff"/><circle cx="894" cy="929" r="10" fill="#a66bf2"/>
    <path d="M889 933 V928 H899 V933 M888 928 L894 924 L900 928 M892.5 933 V930 H895.5 V933" fill="none" stroke="#fff" stroke-width="1.2"/>
    <circle cx="758" cy="961" r="13" fill="#fff"/><circle cx="758" cy="960" r="11" fill="#ee3fc0"/>
    <circle cx="1076" cy="961" r="13" fill="#fff"/><circle cx="1076" cy="960" r="11" fill="#a66bf2"/>
  </g>
  <!-- bus stops -->
  <g id="bus"></g>
  <g fill="#455a64" stroke="#fff" stroke-width="1.6">
    <rect x="975.500" y="918.500" width="13" height="13" rx="4"/><rect x="1017.500" y="933.500" width="13" height="13" rx="4"/><rect x="1300.500" y="796.500" width="13" height="13" rx="4"/><rect x="1338.500" y="815.500" width="13" height="13" rx="4"/>
  </g>
  <g fill="#fff"><rect x="979" y="921.500" width="6" height="4" rx="1"/><rect x="1021" y="936.500" width="6" height="4" rx="1"/><rect x="1304" y="799.500" width="6" height="4" rx="1"/><rect x="1342" y="818.500" width="6" height="4" rx="1"/>
   <rect x="979" y="926.500" width="6" height="1.500"/><rect x="1021" y="941.500" width="6" height="1.500"/><rect x="1304" y="804.500" width="6" height="1.500"/><rect x="1342" y="823.500" width="6" height="1.500"/></g>
  <!-- red marker -->
  <path d="M955 942 C953.500 931 942 927 942 917 A13 13 0 0 1 968 917 C968 927 956.500 931 955 942 Z" fill="#ea4335"/>
  <circle cx="955" cy="917" r="5.200" fill="#b31412"/>
</svg>
<!-- autocomplete card -->
<div class="abs" style="left:11px;top:11px;width:424px;height:115px;background:#fff;box-shadow:0 1px 4px rgba(0,0,0,.3)">
  <div class="abs" style="left:12px;top:10px;font-size:18px;font-weight:bold;line-height:22px;color:#23262d;white-space:nowrap;transform-origin:0 50%;transform:scaleX(.937)">Autocomplete Search</div>
  <div class="abs" style="left:12px;top:64px;width:400px;height:39px;border:1px solid #dfe1e5;border-radius:4px"><span class="abs" style="left:13px;top:9px;font-size:13.7px;line-height:18px;color:#b8b8b8;white-space:nowrap">Enter a location</span></div>
</div>
<!-- fullscreen button -->
<div class="abs" style="left:1055px;top:11px;width:40px;height:40px;background:#fff;border-radius:2px;box-shadow:0 1px 4px -1px rgba(0,0,0,.3)">
  <svg class="abs" style="left:11px;top:11px" width="18" height="18" viewBox="0 0 18 18" fill="none" stroke="#666" stroke-width="2.5"><path d="M1.500 6 V1.500 H6 M12 1.500 H16.500 V6 M16.500 12 V16.500 H12 M6 16.500 H1.500 V12"/></svg>
</div>
<!-- pegman button -->
<div class="abs" style="left:1055px;top:122px;width:40px;height:60px;background:#fff;border-radius:2px;box-shadow:0 1px 4px -1px rgba(0,0,0,.3)">
  <svg class="abs" style="left:11px;top:5px" width="18" height="32" viewBox="0 0 18 32"><circle cx="9" cy="5.500" r="5" fill="#f6b21b"/><path d="M3.500 12 Q9 9 14.500 12 L16.500 21 L14.500 22 L13.500 19 L13 31 H10 L9 23 L8 31 H5 L4.500 19 L3.500 22 L1.500 21 Z" fill="#f6b21b"/><path d="M5.500 11 L9 15 L12.500 11 Z" fill="#e8852b"/></svg>
</div>

  </div>

</div></div>

<div class="abs" style="left:1887px;top:915px;width:23px;height:28px;border-radius:4px;background:#1b1b1b;color:#fff;font-size:13px;font-weight:bold;line-height:28px;text-align:center">7</div>
<div class="abs" style="left:11px;top:877px;width:60px;height:60px;border-radius:50%;background:#fff;box-shadow:0 1px 5px rgba(0,0,0,.35)">
  <svg class="abs" style="left:0;top:0" width="60" height="60" viewBox="72.8 46.3 397.2 397.2"><path d="M165 185 L265 125 L355 170 L355 218 L272 262 L272 232 L315 210 L315 195 L265 168 L208 202 L208 332 L165 310 Z" fill="#343434"/><path d="M222 208 L258 190 L258 318 L278 328 L345 290 L345 248 L378 238 L378 305 L278 362 L222 335 Z" fill="#f2672a"/></svg>
</div>
<div class="abs tb" style="left:77px;width:49px">Stop</div>
<div class="abs tb" style="left:136px;width:100px">Discard</div>
<div class="abs tb" style="left:246px;width:38px"><svg class="abs" style="left:8px;top:11px" width="22" height="22" viewBox="0 0 22 22" fill="none" stroke="#111" stroke-width="1.500" stroke-linecap="round" stroke-linejoin="round"><path d="M20 6.500 H2.500 M6.500 2.500 L2.500 6.500 L6.500 10.500"/><path d="M2 15.500 H19.500 M15.500 11.500 L19.500 15.500 L15.500 19.500"/></svg></div>


</body>
</html>
